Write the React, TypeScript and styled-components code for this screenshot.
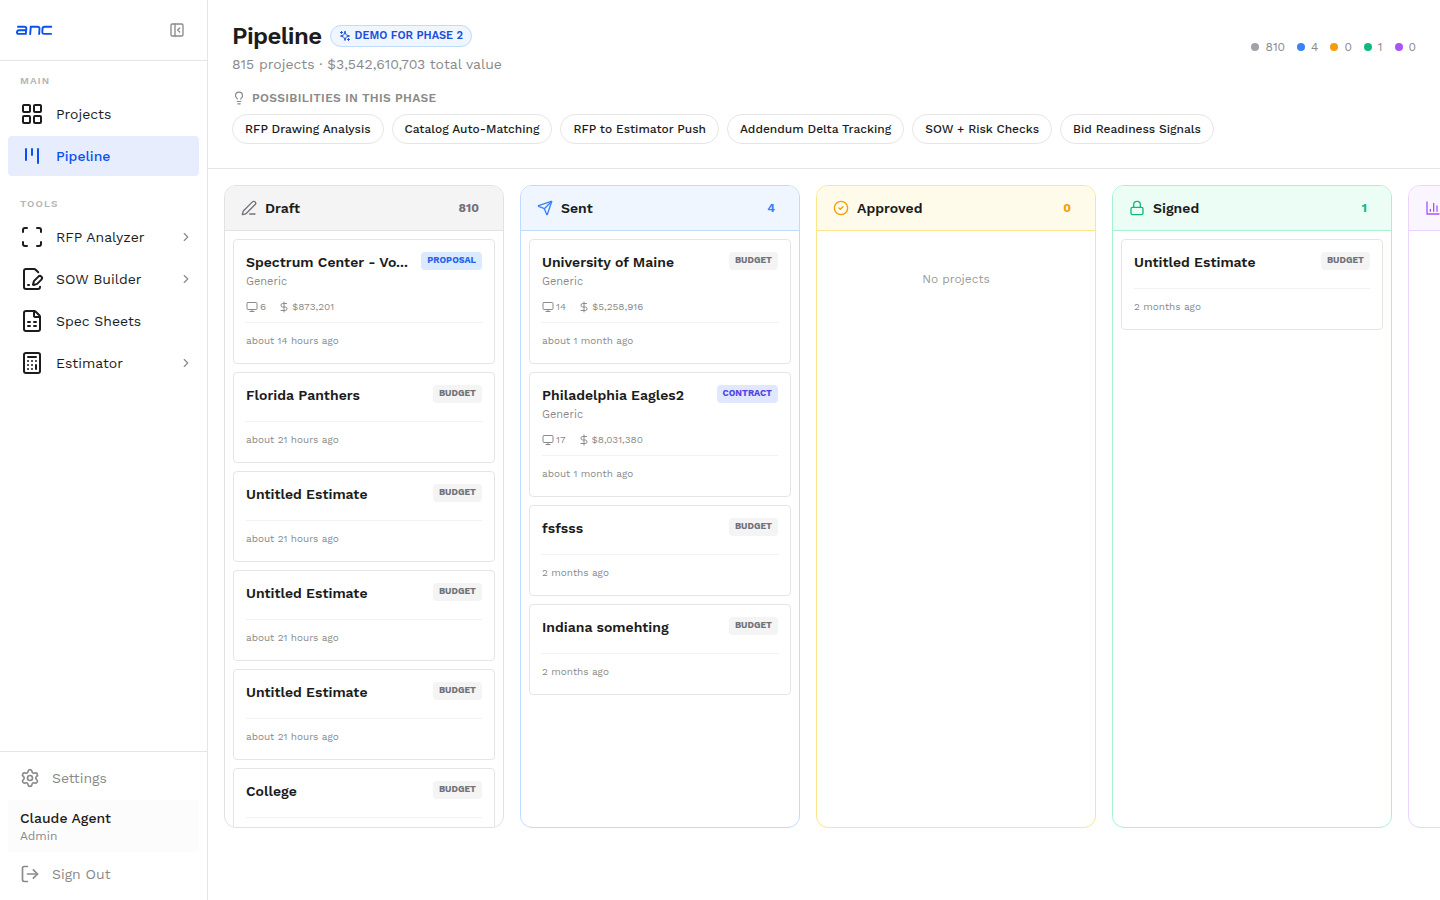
import React from "react";
import styled, { createGlobalStyle, css } from "styled-components";
import {
  Calculator,
  ChevronRight,
  CircleCheck,
  DollarSign,
  FilePenLine,
  FileSpreadsheet,
  LayoutGrid,
  Lightbulb,
  Lock,
  LogOut,
  Monitor,
  PanelLeftClose,
  PenLine,
  Scan,
  Send,
  Settings,
} from "lucide-react";

const color = {
  text: "#1c1c1c",
  muted: "#8a8a8a",
  faint: "#b5b5b5",
  border: "#e5e5e5",
  primary: "#0a52ef",
};

const GlobalStyle = createGlobalStyle`
  *, *::before, *::after { box-sizing: border-box; }
  body {
    margin: 0;
    background: #fff;
    color: ${color.text};
    font-family: "Work Sans", Inter, "Liberation Sans", sans-serif;
    font-size: 14px;
    line-height: 20px;
  }
  h1, h2, h3, p, ul { margin: 0; padding: 0; }
  ul { list-style: none; }
  button { font: inherit; color: inherit; background: none; border: 0; padding: 0; cursor: pointer; }
  a { color: inherit; text-decoration: none; }
  svg { flex-shrink: 0; display: block; }
`;

const Shell = styled.div`
  display: flex;
  height: 100vh;
  overflow: hidden;
`;

const Sidebar = styled.aside`
  display: flex;
  flex-direction: column;
  flex: 0 0 208px;
  border-right: 1px solid ${color.border};
`;

const Brand = styled.div`
  display: flex;
  align-items: center;
  justify-content: space-between;
  height: 61px;
  padding: 0 22px 0 16px;
  border-bottom: 1px solid ${color.border};
`;

const CollapseButton = styled.button`
  color: ${color.muted};
`;

const Nav = styled.nav`
  flex: 1;
  padding: 12px 8px;
`;

const NavGroup = styled.section`
  & + & {
    margin-top: 20px;
  }
`;

const NavLabel = styled.h2`
  padding: 0 12px;
  margin-bottom: 5px;
  font-size: 10px;
  line-height: 16px;
  font-weight: 600;
  letter-spacing: 1px;
  text-transform: uppercase;
  color: ${color.faint};
`;

const NavList = styled.ul`
  display: grid;
  gap: 2px;
`;

const NavLink = styled.a<{ $active?: boolean }>`
  display: flex;
  align-items: center;
  gap: 12px;
  height: 40px;
  padding: 0 6px 0 12px;
  border-radius: 4px;
  ${(p) =>
    p.$active &&
    css`
      background: #e7edfd;
      color: ${color.primary};
      font-weight: 500;
    `}
`;

const NavText = styled.span`
  flex: 1;
`;

const NavChevron = styled(ChevronRight)`
  color: ${color.muted};
`;

const SidebarFooter = styled.div`
  display: grid;
  gap: 4px;
  padding: 8px;
  border-top: 1px solid ${color.border};
`;

const footerItem = css`
  display: flex;
  align-items: center;
  gap: 12px;
  height: 36px;
  padding: 0 12px;
  color: ${color.muted};
`;

const FooterLink = styled.a`
  ${footerItem}
`;

const FooterButton = styled.button`
  ${footerItem}
`;

const UserBox = styled.div`
  padding: 8px 12px;
  border-radius: 4px;
  background: #fcfcfc;
`;

const UserName = styled.p`
  font-weight: 500;
`;

const UserRole = styled.p`
  font-size: 12px;
  line-height: 16px;
  color: ${color.muted};
`;

const Main = styled.main`
  display: flex;
  flex-direction: column;
  flex: 1;
  min-width: 0;
`;

const Header = styled.header`
  padding: 20px 24px 24px;
  border-bottom: 1px solid ${color.border};
`;

const HeaderTop = styled.div`
  display: flex;
  align-items: center;
  justify-content: space-between;
`;

const TitleRow = styled.div`
  display: flex;
  align-items: center;
  gap: 8px;
`;

const Title = styled.h1`
  font-size: 24px;
  line-height: 32px;
  font-weight: 600;
  letter-spacing: -0.025em;
`;

const DemoBadge = styled.span`
  display: inline-flex;
  align-items: center;
  gap: 4px;
  height: 22px;
  padding: 0 8px;
  border: 1px solid #bfdbfe;
  border-radius: 11px;
  background: #eff6ff;
  color: #1d4ed8;
  font-size: 11px;
  font-weight: 600;
  text-transform: uppercase;
`;

const Summary = styled.p`
  margin-top: 2px;
  color: ${color.muted};
`;

const Totals = styled.ul`
  display: flex;
  gap: 12px;
  font-size: 12px;
  line-height: 16px;
  color: ${color.muted};
`;

const Total = styled.li`
  display: flex;
  align-items: center;
  gap: 6px;
`;

const Dot = styled.span<{ $color: string }>`
  width: 8px;
  height: 8px;
  border-radius: 50%;
  background: ${(p) => p.$color};
`;

const PhaseLabel = styled.h2`
  display: flex;
  align-items: center;
  gap: 6px;
  margin: 16px 0 8px;
  font-size: 12px;
  line-height: 16px;
  font-weight: 600;
  letter-spacing: 0.025em;
  text-transform: uppercase;
  color: ${color.muted};
`;

const Chips = styled.ul`
  display: flex;
  flex-wrap: wrap;
  gap: 8px;
`;

const Chip = styled.li`
  height: 30px;
  padding: 0 12px;
  border: 1px solid ${color.border};
  border-radius: 15px;
  font-size: 12px;
  line-height: 28px;
  font-weight: 500;
`;

const Board = styled.div`
  display: flex;
  flex: 1;
  gap: 16px;
  min-height: 0;
  padding: 16px 16px 72px;
  overflow: hidden;
`;

const Column = styled.section<{ $border: string }>`
  display: flex;
  flex-direction: column;
  flex: 0 0 280px;
  border: 1px solid ${(p) => p.$border};
  border-radius: 12px;
  overflow: hidden;
`;

const ColumnHead = styled.div<{ $bg: string; $border: string; $tone: string }>`
  display: flex;
  align-items: center;
  gap: 8px;
  flex: 0 0 45px;
  padding: 0 24px 0 16px;
  border-bottom: 1px solid ${(p) => p.$border};
  background: ${(p) => p.$bg};
  color: ${(p) => p.$tone};
`;

const ColumnTitle = styled.h2`
  flex: 1;
  font-size: 14px;
  line-height: 20px;
  font-weight: 600;
  color: ${color.text};
`;

const ColumnCount = styled.span`
  font-size: 12px;
  line-height: 16px;
  font-weight: 700;
`;

const ColumnBody = styled.div`
  display: flex;
  flex-direction: column;
  flex: 1;
  gap: 8px;
  min-height: 0;
  padding: 8px;
  overflow-y: auto;
  scrollbar-width: none;
`;

const Empty = styled.p`
  padding: 32px 0;
  font-size: 12px;
  line-height: 16px;
  text-align: center;
  color: #9a9a9a;
`;

const CardBox = styled.article`
  flex-shrink: 0;
  padding: 12px;
  border: 1px solid ${color.border};
  border-radius: 4px;
`;

const CardHead = styled.div`
  display: flex;
  align-items: flex-start;
  justify-content: space-between;
  gap: 8px;
  height: 20px;
`;

const CardTitle = styled.h3`
  min-width: 0;
  overflow: hidden;
  white-space: nowrap;
  text-overflow: ellipsis;
  font-size: 14px;
  line-height: 20px;
  font-weight: 600;
`;

type Kind = "Budget" | "Proposal" | "Contract";

const kinds: Record<Kind, { bg: string; fg: string }> = {
  Budget: { bg: "#f4f4f4", fg: "#71717a" },
  Proposal: { bg: "#dbeafe", fg: "#2563eb" },
  Contract: { bg: "#e0e7ff", fg: "#4f46e5" },
};

const KindBadge = styled.span<{ $kind: Kind }>`
  flex-shrink: 0;
  padding: 0 6px 2px;
  border-radius: 4px;
  background: ${(p) => kinds[p.$kind].bg};
  color: ${(p) => kinds[p.$kind].fg};
  font-size: 9px;
  line-height: 16px;
  font-weight: 700;
  text-transform: uppercase;
`;

const Client = styled.p`
  font-size: 11px;
  line-height: 20px;
  color: ${color.muted};
`;

const Facts = styled.div`
  display: flex;
  gap: 12px;
  margin-top: 6px;
  font-size: 10px;
  line-height: 18px;
  color: ${color.muted};
`;

const Fact = styled.span`
  display: flex;
  align-items: center;
  gap: 2px;
`;

const CardFoot = styled.div<{ $plain: boolean }>`
  margin-top: ${(p) => (p.$plain ? 16 : 6)}px;
  padding-top: 8px;
  border-top: 1px solid #f2f2f2;
  font-size: 10px;
  line-height: 20px;
  color: ${color.muted};
`;

const Logo = () => (
  <svg width="36" height="10" viewBox="0 0 36 10" fill="none" stroke={color.primary} strokeWidth="1.9" role="img" aria-label="anc">
    <path d="M1.2 1.7H8.4Q10.5 1.7 10.3 3.6L9.8 8.9H2.6Q0.9 8.9 1 7.2Q1.1 5.2 3 5.2H10" />
    <path d="M14.1 9.8L14.8 1.7H21.4Q23.6 1.7 23.5 3.8L23.1 9.8" />
    <path d="M36 1.7H28.6Q26.6 1.7 26.5 3.6L26.3 7Q26.2 8.9 28.2 8.9H35.8" />
  </svg>
);

const Sparkle = () => (
  <svg width="12" height="12" viewBox="0 0 24 24" fill="none" stroke="currentColor" strokeWidth="2" strokeLinecap="round" strokeLinejoin="round" aria-hidden="true">
    <path d="m12 3-1.912 5.813a2 2 0 0 1-1.275 1.275L3 12l5.813 1.912a2 2 0 0 1 1.275 1.275L12 21l1.912-5.813a2 2 0 0 1 1.275-1.275L21 12l-5.813-1.912a2 2 0 0 1-1.275-1.275L12 3Z" />
    <path d="M5 3v4M19 17v4M3 5h4M17 19h4" />
  </svg>
);

interface IconProps {
  size?: number;
  strokeWidth?: number;
}

type Icon = React.ComponentType<IconProps>;

const BarsIcon = ({ size = 24, strokeWidth = 2 }: IconProps) => (
  <svg width={size} height={size} viewBox="0 0 24 24" fill="none" stroke="currentColor" strokeWidth={strokeWidth} strokeLinecap="round" strokeLinejoin="round" aria-hidden="true">
    <path d="M3 3v18h18M18 17V9M13 17V5M8 17v-3" />
  </svg>
);

const LanesIcon = ({ size = 24, strokeWidth = 2 }: IconProps) => (
  <svg width={size} height={size} viewBox="0 0 24 24" fill="none" stroke="currentColor" strokeWidth={strokeWidth} strokeLinecap="round" strokeLinejoin="round" aria-hidden="true">
    <path d="M6 5v11M12 5v6M18 5v14" />
  </svg>
);

interface NavEntry {
  label: string;
  icon: Icon;
  active?: boolean;
  nested?: boolean;
}

const navGroups: { label: string; items: NavEntry[] }[] = [
  {
    label: "Main",
    items: [
      { label: "Projects", icon: LayoutGrid },
      { label: "Pipeline", icon: LanesIcon, active: true },
    ],
  },
  {
    label: "Tools",
    items: [
      { label: "RFP Analyzer", icon: Scan, nested: true },
      { label: "SOW Builder", icon: FilePenLine, nested: true },
      { label: "Spec Sheets", icon: FileSpreadsheet },
      { label: "Estimator", icon: Calculator, nested: true },
    ],
  },
];

const totals = [
  { color: "#a1a1aa", value: 810 },
  { color: "#3b82f6", value: 4 },
  { color: "#f59e0b", value: 0 },
  { color: "#10b981", value: 1 },
  { color: "#a855f7", value: 0 },
];

const possibilities = [
  "RFP Drawing Analysis",
  "Catalog Auto-Matching",
  "RFP to Estimator Push",
  "Addendum Delta Tracking",
  "SOW + Risk Checks",
  "Bid Readiness Signals",
];

interface Project {
  title: string;
  kind: Kind;
  age?: string;
  client?: string;
  screens?: number;
  value?: string;
}

interface Stage {
  id: string;
  title?: string;
  count?: number;
  icon: Icon;
  tone: string;
  bg: string;
  border: string;
  projects: Project[];
}

const stages: Stage[] = [
  {
    id: "draft",
    title: "Draft",
    count: 810,
    icon: PenLine,
    tone: "#71717a",
    bg: "#f4f4f4",
    border: "#e2e2e4",
    projects: [
      { title: "Spectrum Center - Vo...", kind: "Proposal", age: "about 14 hours ago", client: "Generic", screens: 6, value: "$873,201" },
      { title: "Florida Panthers", kind: "Budget", age: "about 21 hours ago" },
      { title: "Untitled Estimate", kind: "Budget", age: "about 21 hours ago" },
      { title: "Untitled Estimate", kind: "Budget", age: "about 21 hours ago" },
      { title: "Untitled Estimate", kind: "Budget", age: "about 21 hours ago" },
      { title: "College", kind: "Budget" },
    ],
  },
  {
    id: "sent",
    title: "Sent",
    count: 4,
    icon: Send,
    tone: "#3b82f6",
    bg: "#eff6ff",
    border: "#bfdbfe",
    projects: [
      { title: "University of Maine", kind: "Budget", age: "about 1 month ago", client: "Generic", screens: 14, value: "$5,258,916" },
      { title: "Philadelphia Eagles2", kind: "Contract", age: "about 1 month ago", client: "Generic", screens: 17, value: "$8,031,380" },
      { title: "fsfsss", kind: "Budget", age: "2 months ago" },
      { title: "Indiana somehting", kind: "Budget", age: "2 months ago" },
    ],
  },
  { id: "approved", title: "Approved", count: 0, icon: CircleCheck, tone: "#f59e0b", bg: "#fffbeb", border: "#fde68a", projects: [] },
  {
    id: "signed",
    title: "Signed",
    count: 1,
    icon: Lock,
    tone: "#10b981",
    bg: "#ecfdf5",
    border: "#a7f3d0",
    projects: [{ title: "Untitled Estimate", kind: "Budget", age: "2 months ago" }],
  },
  { id: "last", icon: BarsIcon, tone: "#a855f7", bg: "#faf5ff", border: "#e9d5ff", projects: [] },
];

const ProjectCard = ({ project }: { project: Project }) => (
  <CardBox>
    <CardHead>
      <CardTitle>{project.title}</CardTitle>
      <KindBadge $kind={project.kind}>{project.kind}</KindBadge>
    </CardHead>
    {project.client && (
      <>
        <Client>{project.client}</Client>
        <Facts>
          <Fact>
            <Monitor size={12} />
            {project.screens}
          </Fact>
          <Fact>
            <DollarSign size={12} />
            {project.value}
          </Fact>
        </Facts>
      </>
    )}
    <CardFoot $plain={!project.client}>{project.age}</CardFoot>
  </CardBox>
);

export default function App() {
  return (
    <>
      <GlobalStyle />
      <Shell>
        <Sidebar>
          <Brand>
            <Logo />
            <CollapseButton type="button" aria-label="Collapse sidebar">
              <PanelLeftClose size={16} />
            </CollapseButton>
          </Brand>
          <Nav>
            {navGroups.map((group) => (
              <NavGroup key={group.label}>
                <NavLabel>{group.label}</NavLabel>
                <NavList>
                  {group.items.map(({ label, icon: ItemIcon, active, nested }) => (
                    <li key={label}>
                      <NavLink href="#" $active={active}>
                        <ItemIcon size={24} />
                        <NavText>{label}</NavText>
                        {nested && <NavChevron size={14} />}
                      </NavLink>
                    </li>
                  ))}
                </NavList>
              </NavGroup>
            ))}
          </Nav>
          <SidebarFooter>
            <FooterLink href="#">
              <Settings size={20} />
              Settings
            </FooterLink>
            <UserBox>
              <UserName>Claude Agent</UserName>
              <UserRole>Admin</UserRole>
            </UserBox>
            <FooterButton type="button">
              <LogOut size={20} />
              Sign Out
            </FooterButton>
          </SidebarFooter>
        </Sidebar>
        <Main>
          <Header>
            <HeaderTop>
              <div>
                <TitleRow>
                  <Title>Pipeline</Title>
                  <DemoBadge>
                    <Sparkle />
                    Demo for Phase 2
                  </DemoBadge>
                </TitleRow>
                <Summary>815 projects · $3,542,610,703 total value</Summary>
              </div>
              <Totals>
                {totals.map((total) => (
                  <Total key={total.color}>
                    <Dot $color={total.color} />
                    {total.value}
                  </Total>
                ))}
              </Totals>
            </HeaderTop>
            <PhaseLabel>
              <Lightbulb size={14} />
              Possibilities in this phase
            </PhaseLabel>
            <Chips>
              {possibilities.map((label) => (
                <Chip key={label}>{label}</Chip>
              ))}
            </Chips>
          </Header>
          <Board>
            {stages.map((stage) => {
              const StageIcon = stage.icon;
              return (
                <Column key={stage.id} $border={stage.border}>
                  <ColumnHead $bg={stage.bg} $border={stage.border} $tone={stage.tone}>
                    <StageIcon size={16} />
                    {stage.title && <ColumnTitle>{stage.title}</ColumnTitle>}
                    {stage.count !== undefined && <ColumnCount>{stage.count}</ColumnCount>}
                  </ColumnHead>
                  <ColumnBody>
                    {stage.projects.map((project, i) => (
                      <ProjectCard key={i} project={project} />
                    ))}
                    {stage.title && stage.projects.length === 0 && <Empty>No projects</Empty>}
                  </ColumnBody>
                </Column>
              );
            })}
          </Board>
        </Main>
      </Shell>
    </>
  );
}
